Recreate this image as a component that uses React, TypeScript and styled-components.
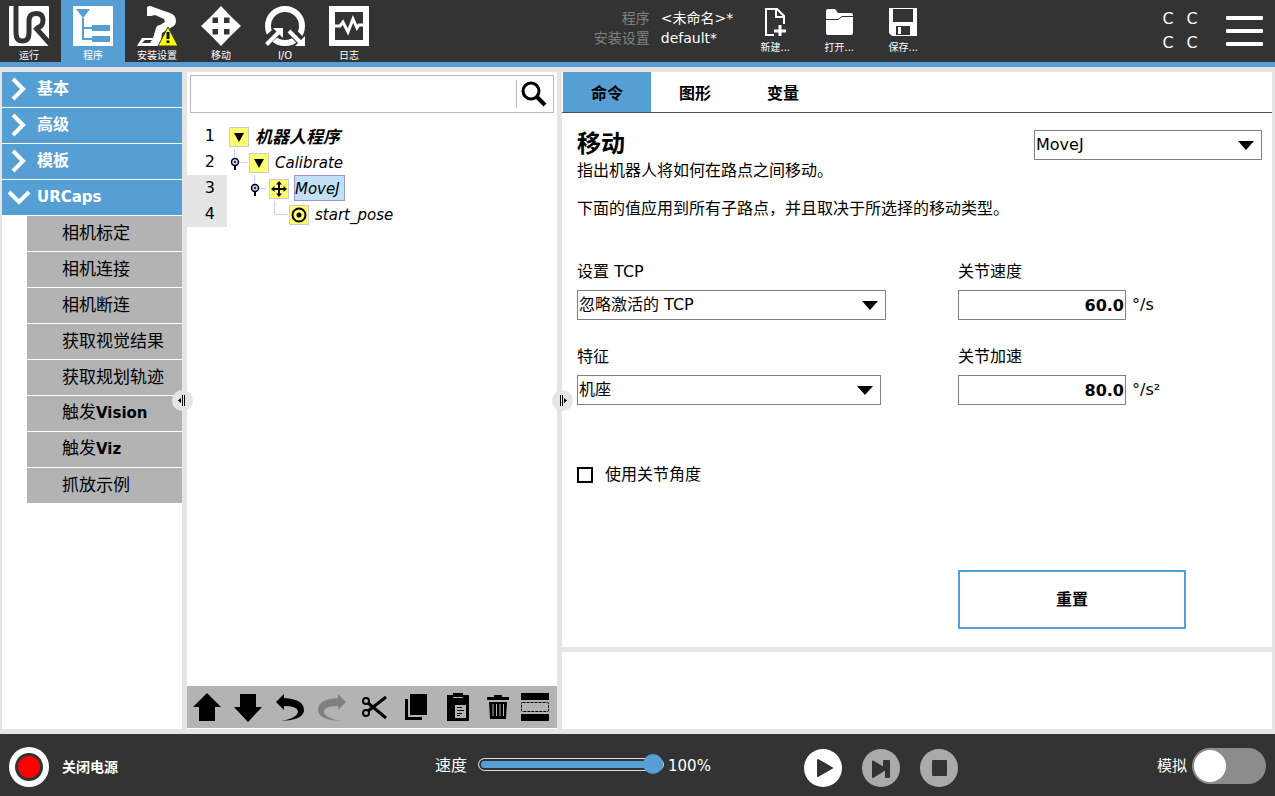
import React from "react";
import styled, { createGlobalStyle, css } from "styled-components";

const blue = "#569fd4";
const dark = "#333333";
const grey = "#b3b3b3";
const line = "#e5e5e5";
const sans = `"DejaVu Sans", "Noto Sans CJK SC", sans-serif`;

const Global = createGlobalStyle`
  *, *::before, *::after { box-sizing: border-box; }
  body { margin: 0; background: ${line}; color: #000; font: 15px/20px ${sans}; }
  button, input, select { font: inherit; color: inherit; margin: 0; }
  button { border: 0; padding: 0; background: none; cursor: pointer; }
  svg { display: block; flex: none; }
  p, h1, ul, ol { margin: 0; padding: 0; list-style: none; }
`;

const Page = styled.div`
  display: grid;
  grid-template-rows: 67px 1fr 62px;
  min-height: 100vh;
`;

/* ---------- header ---------- */
const Header = styled.header`
  display: flex;
  align-items: stretch;
  background: ${dark};
  border-bottom: 5px solid ${blue};
  color: #fff;
`;
const MainNav = styled.nav`
  display: flex;
  margin-left: -3px;
`;
const IconButton = styled.button<{ $active?: boolean; $file?: boolean }>`
  width: 64px;
  padding-top: ${(p) => (p.$file ? 8 : 6)}px;
  display: flex;
  flex-direction: column;
  align-items: center;
  gap: ${(p) => (p.$file ? 5 : 3)}px;
  background: ${(p) => (p.$active ? blue : "none")};
  font-size: 10px;
  line-height: 14px;
`;
const FileArea = styled.div`
  display: flex;
  flex: 1;
  justify-content: center;
`;
const FileInfo = styled.dl`
  display: grid;
  grid-template-columns: auto auto;
  column-gap: 11px;
  margin: 8px 10px 0 0;
  align-content: start;
  font-size: 14px;
  line-height: 20px;
  dt { color: #808080; text-align: right; }
  dd { margin: 0; }
`;
const Corner = styled.div`
  display: flex;
  align-items: flex-start;
  padding-right: 12px;
`;
const Checksum = styled.div`
  display: grid;
  grid-template-columns: 24px 24px;
  line-height: 24px;
  margin: 7px 22px 0 8px;
  font-size: 16px;
  text-align: center;
`;
const MenuButton = styled.button`
  display: grid;
  gap: 8px;
  width: 37px;
  margin-top: 16px;
  i { height: 4px; border-radius: 1px; background: #fff; margin-bottom: 1px; }
`;

/* ---------- work area ---------- */
const Work = styled.main`
  display: grid;
  grid-template-columns: 180px minmax(0, 370fr) minmax(0, 710fr);
  gap: 5px;
  padding: 5px 3px 5px 2px;
`;
const Panel = styled.section`
  position: relative;
  display: flex;
  flex-direction: column;
  min-width: 0;
  background: #fff;
`;
const Handle = styled.button<{ $offset: number }>`
  position: absolute;
  left: ${(p) => p.$offset}px;
  top: calc(50% - 11px);
  z-index: 1;
  width: 21px;
  height: 21px;
  border-radius: 50%;
  background: ${line};
`;

const Category = styled.button`
  display: flex;
  align-items: center;
  gap: 6px;
  height: 36px;
  padding: 0 0 2px 3px;
  border-bottom: 1px solid #fff;
  background: ${blue};
  color: #fff;
  font-weight: bold;
  font-size: 16px;
  text-align: left;
`;
const Latin = styled.b`
  font-size: 15px;
`;
const SubItem = styled.button`
  height: 36px;
  margin-left: 25px;
  padding: 0 0 2px 35px;
  border-bottom: 1px solid #fff;
  background: ${grey};
  font-size: 17px;
  text-align: left;
`;

const SearchBox = styled.div`
  display: flex;
  align-items: center;
  height: 38px;
  margin: 3px 3px 10px;
  border: 1px solid #b8b8b8;
`;
const SearchInput = styled.input`
  flex: 1;
  min-width: 0;
  height: 100%;
  border: 0;
  padding: 0 8px;
  outline: none;
  background: none;
`;
const SearchButton = styled.button`
  display: grid;
  place-items: center;
  width: 37px;
  height: 28px;
  padding-right: 2px;
  border-left: 1px solid #b8b8b8;
`;
const TreeRow = styled.li`
  display: flex;
  height: 26px;
`;
const LineNumber = styled.span<{ $shaded?: boolean }>`
  width: 40px;
  padding-right: 12px;
  text-align: right;
  font-size: 16px;
  line-height: 26px;
  background: ${(p) => (p.$shaded ? line : "none")};
`;
const Node = styled.div<{ $depth: number }>`
  display: flex;
  align-items: center;
  padding-left: ${(p) => (p.$depth ? p.$depth * 20 - 18 : 2)}px;
`;
const NodeIcon = styled.span`
  display: grid;
  place-items: center;
  width: 20px;
  height: 20px;
  margin-top: 1px;
  border: 1px solid #ccc;
  background: #ffff70;
`;
const NodeName = styled.span<{ $root?: boolean; $selected?: boolean }>`
  margin-left: 5px;
  height: 26px;
  line-height: 26px;
  border: 1px solid transparent;
  font-style: italic;
  ${(p) => p.$root && css`font-weight: bold; font-size: 17px;`}
  ${(p) => p.$selected && css`background: #c2e0f5; border-color: #9999cc; padding-right: 4px;`}
`;
const EditBar = styled.div`
  display: grid;
  grid-template-columns: 40px repeat(6, 42px) repeat(2, 37px);
  place-items: center;
  height: 42px;
  margin: auto 0 1px;
  background: ${grey};
`;

const RightColumn = styled.div`
  position: relative;
  display: grid;
  grid-template-rows: 1fr 77px;
  gap: 5px;
  min-width: 0;
`;
const Tabs = styled.div`
  display: flex;
  height: 41px;
  padding-left: 1px;
  border-bottom: 1px solid #4d4d4d;
`;
const Tab = styled.button<{ $active?: boolean }>`
  width: 88px;
  padding-top: 3px;
  font-weight: bold;
  font-size: 16px;
  background: ${(p) => (p.$active ? blue : "none")};
`;
const Form = styled.form`
  display: flex;
  flex: 1;
  flex-direction: column;
  padding: 17px 10px 18px 15px;
  font-size: 16px;
`;
const FormTop = styled.div`
  display: flex;
  justify-content: space-between;
`;
const Title = styled.h1`
  margin-bottom: 3px;
  font-size: 24px;
  line-height: 28px;
`;
const Lead = styled.p`
  margin-bottom: 18px;
`;
const Fields = styled.div`
  display: grid;
  grid-template-columns: minmax(0, 381fr) minmax(0, 304fr);
  row-gap: 27px;
  margin-top: 43px;
`;
const Field = styled.div`
  display: grid;
  gap: 8px;
  justify-items: start;
`;
const SelectBox = styled.div<{ $width: number }>`
  display: grid;
  align-items: center;
  width: ${(p) => p.$width}px;
  max-width: 100%;
  height: 30px;
  border: 1px solid #808080;
  > * { grid-area: 1 / 1; }
  svg { justify-self: end; margin-right: 7px; pointer-events: none; }
`;
const Select = styled.select`
  appearance: none;
  width: 100%;
  height: 28px;
  padding: 0 24px 0 1px;
  border: 0;
  border-radius: 0;
  outline: none;
  background: #fff;
`;
const ValueRow = styled.div`
  display: flex;
  align-items: center;
  gap: 6px;
`;
const NumberInput = styled.input`
  width: 168px;
  height: 30px;
  padding: 0 1px;
  border: 1px solid #808080;
  font-weight: bold;
  text-align: right;
`;
const CheckRow = styled.label`
  display: flex;
  align-items: center;
  gap: 12px;
  margin-top: 60px;
`;
const Check = styled.input`
  appearance: none;
  width: 16px;
  height: 16px;
  border: 2px solid #000;
  background: #fff;
  &:checked { background: #000; }
`;
const ResetRow = styled.div`
  display: grid;
  grid-template-columns: minmax(0, 381fr) minmax(0, 304fr);
  margin-top: auto;
`;
const ResetButton = styled.button`
  grid-column: 2;
  width: 228px;
  height: 59px;
  border: 2px solid ${blue};
  font-weight: bold;
`;

/* ---------- footer ---------- */
const Footer = styled.footer`
  display: grid;
  grid-template-columns: 426fr 369fr 462fr;
  align-items: center;
  padding: 2px 9px 0;
  background: ${dark};
  color: #fff;
  font-size: 16px;
`;
const PowerButton = styled.button`
  display: flex;
  align-items: center;
  justify-self: start;
  gap: 13px;
  padding-top: 1px;
  font-size: 14px;
  font-weight: bold;
`;
const Speed = styled.div`
  display: flex;
  align-items: center;
  padding-bottom: 4px;
  label { padding-top: 3px; }
`;
const SpeedTrack = styled.input`
  appearance: none;
  width: 186px;
  height: 20px;
  margin: 0 4px 0 11px;
  background: none;
  &::-webkit-slider-runnable-track {
    height: 13px;
    border: 1px solid #ddd;
    border-radius: 7px;
    background: ${blue};
    box-shadow: inset 0 0 0 2px ${dark};
  }
  &::-webkit-slider-thumb {
    appearance: none;
    width: 20px;
    height: 20px;
    margin-top: -5px;
    border-radius: 50%;
    background: ${blue};
  }
`;
const SpeedValue = styled.output`
  font-size: 15px;
  padding-top: 3px;
`;
const Playback = styled.div`
  display: flex;
  gap: 20px;
`;
const RightEnd = styled.div`
  display: flex;
  align-items: center;
  justify-content: space-between;
  padding-top: 4px;
`;
const SimLabel = styled.label`
  display: flex;
  align-items: center;
  gap: 5px;
  font-size: 15px;
  padding-bottom: 4px;
`;
const Toggle = styled.input`
  appearance: none;
  display: flex;
  align-items: center;
  width: 74px;
  height: 36px;
  padding: 2px;
  border-radius: 18px;
  background: #8c8c8c;
  &::before { content: ""; width: 32px; height: 32px; border-radius: 50%; background: #fff; }
  &:checked { justify-content: flex-end; }
`;

/* ---------- drawings ---------- */
const LogoIcon = () => (
  <svg width="40" height="40" viewBox="0 0 40 40">
    <rect width="40" height="40" rx="1" fill="#fff" />
    <path
      d="M7 -1V27Q7 35 13.500 35Q20 35 20 27V15Q20 7.500 27 7.500Q34 7.500 34 14Q34 20.500 28 22"
      fill="none" stroke={dark} strokeWidth="5"
    />
    <path d="M26 21L42 39" stroke={dark} strokeWidth="5" />
  </svg>
);
const ProgramIcon = () => (
  <svg width="40" height="40" viewBox="0 0 40 40">
    <rect width="40" height="40" fill="#fff" />
    <path d="M3 3H17L10 12ZM19 19H37V25H19ZM19 30H37V36H19Z" fill={blue} />
    <path d="M10 12V33H19M10 22H19" fill="none" stroke={blue} strokeWidth="2" />
  </svg>
);
const RobotIcon = () => (
  <svg width="40" height="40" viewBox="0 0 40 40">
    <path d="M10 1Q13 -1 16 1L33 7Q39 9 39 15Q39 19 35 21L25 27L24 36H31L32 40H0L5 32H16L19 22Q20 19 23 19L28 16L27 13L18 9L14 10H10Z" fill="#fff" />
    <path d="M8 34H15L13 37H5Z" fill={dark} />
    <path d="M31 21L41 40H21Z" fill="#ff0" stroke={dark} strokeLinejoin="round" />
    <path d="M31 26V33M31 34.500V37" stroke="#111" strokeWidth="3" />
  </svg>
);
const MoveIcon = () => (
  <svg width="40" height="40" viewBox="0 0 40 40" fill="#fff">
    <path d="M20 0L31 11.500H23V17H28.500V9L40 20L28.500 31V23H23V28.500H31L20 40L9 28.500H17V23H11.500V31L0 20L11.500 9V17H17V11.500H9Z" />
  </svg>
);
const IoIcon = () => (
  <svg width="40" height="40" viewBox="0 0 40 40">
    <circle cx="20" cy="20" r="17" fill="none" stroke="#fff" strokeWidth="6" />
    <path d="M-1 37L14 24M24 23L38 37" stroke={dark} strokeWidth="9" />
    <path d="M1.500 38.500L14 26M24 25L36 37" stroke="#fff" strokeWidth="4" />
    <path d="M8 22H18V32ZM40 30V40H30Z" fill="#fff" />
  </svg>
);
const LogIcon = () => (
  <svg width="40" height="40" viewBox="0 0 40 40">
    <path d="M3 3H37V37H3Z" fill="none" stroke="#fff" strokeWidth="6" />
    <path d="M6 20H11L14 16L19 26L24 13L28 22L30 19H34" fill="none" stroke="#fff" strokeWidth="3" />
  </svg>
);
const NewIcon = () => (
  <svg width="28" height="28" viewBox="0 0 28 28" fill="none" stroke="#fff" strokeWidth="2">
    <path d="M13 27H5V1H16L23 8V16M15 1V9H23" />
    <path d="M19 17V28M13 23H25" strokeWidth="3" />
  </svg>
);
const OpenIcon = () => (
  <svg width="28" height="28" viewBox="0 0 28 28">
    <path d="M1 3Q1 1 3 1H10L13 5H26Q28 5 28 7V25Q28 27 26 27H3Q1 27 1 25Z" fill="#fff" />
    <path d="M0 11.500H13L17 8.500H28" fill="none" stroke={dark} />
  </svg>
);
const SaveIcon = () => (
  <svg width="28" height="28" viewBox="0 0 28 28">
    <path d="M0 0H28V28H3L0 25Z" fill="#fff" />
    <path d="M4 1H24V14H4ZM7 18H21V27H7Z" fill={dark} />
    <path d="M9 19H12V26H9Z" fill="#fff" />
  </svg>
);
const Chevron = ({ open }: { open?: boolean }) => (
  <svg width="26" height="26" viewBox="0 0 26 26" fill="none" stroke="#fff" strokeWidth="4">
    <path d={open ? "M4 8L14 18L24 8" : "M8 3L18 13L8 23"} />
  </svg>
);
const Caret = () => (
  <svg width="16" height="9" viewBox="0 0 16 9"><path d="M0 0H16L8 9Z" /></svg>
);
const Branch = ({ leaf }: { leaf?: boolean }) => (
  <svg width="20" height="26" viewBox="0 0 20 26" fill="none">
    <path d="M5.500 0V13.500H18" stroke="#ccccff" />
    {!leaf && (
      <>
        <path d="M6 15V21" stroke="#000" strokeWidth="2" />
        <circle cx="6" cy="13" r="3.500" fill="#ccccff" stroke="#000" strokeWidth="1.500" />
        <circle cx="6" cy="13" r="1" fill="#000" />
      </>
    )}
  </svg>
);
const Triangle = () => <svg width="10" height="10" viewBox="0 0 10 10"><path d="M0 1H10L5 10Z" /></svg>;
const SmallMove = () => (
  <svg width="16" height="16" viewBox="0 0 16 16">
    <path d="M8 2V14M2 8H14" stroke="#000" strokeWidth="2" />
    <path d="M8 0L11 3.500H5ZM8 16L11 12.500H5ZM0 8L3.500 5V11ZM16 8L12.500 5V11Z" />
  </svg>
);
const Waypoint = () => (
  <svg width="16" height="16" viewBox="0 0 16 16">
    <circle cx="8" cy="8" r="6.500" fill="none" stroke="#000" strokeWidth="2" />
    <circle cx="8" cy="8" r="2.500" />
  </svg>
);

const editIcons: { label: string; art: React.ReactNode; width?: number; color?: string }[] = [
  { label: "上移", art: <path d="M14 0L28 14H22V28H6V14H0Z" /> },
  { label: "下移", art: <path d="M6 1H22V14H28L14 29L0 14H6Z" /> },
  { label: "撤销", art: <path d="M0 9L8 1V5Q28 6 28 17Q28 27 5 28Q22 25 22 18Q21 13 8 13V17Z" /> },
  { label: "重做", color: "#808080", art: <path d="M28 9L20 1V5Q0 6 0 17Q0 27 23 28Q6 25 6 18Q7 13 20 13V17Z" /> },
  {
    label: "剪切", width: 26, art: (
      <g fill="none" stroke="#000" strokeWidth="2">
        <circle cx="5" cy="8" r="3" /><circle cx="5" cy="20" r="3" />
        <path d="M7 10L25 25M7 18L25 4" strokeWidth="3" />
      </g>
    ),
  },
  { label: "复制", width: 24, art: <path d="M6 1H23V22H6ZM1 6H4V24H18V27H1Z" /> },
  {
    label: "粘贴", width: 24, art: (
      <>
        <path d="M1 2H7V5H17V2H23V28H1ZM7 0H17V4H7Z" />
        <path d="M9 12H20V25H9Z" fill={grey} />
        <path d="M11 14.500H16M11 17.500H18M11 20.500H16M11 22.500H14" stroke="#000" />
      </>
    ),
  },
  {
    label: "删除", width: 22, art: (
      <>
        <path d="M0 4H22V7H0ZM2 9H20L19 26H3Z" />
        <path d="M8 5V3H14V5" fill="none" stroke="#000" strokeWidth="2" />
        <path d="M6 11V23M9.500 11V23M13 11V23M16.500 11V23" stroke={grey} />
      </>
    ),
  },
  {
    label: "抑制", art: (
      <>
        <path d="M0 0H28V7H0ZM0 21H28V28H0Z" />
        <rect x="0.500" y="9.500" width="27" height="9" rx="1" fill="none" stroke="#000" strokeDasharray="3 1" />
      </>
    ),
  },
];

const mainNav = [
  { label: "运行", icon: <LogoIcon /> },
  { label: "程序", icon: <ProgramIcon />, active: true },
  { label: "安装设置", icon: <RobotIcon /> },
  { label: "移动", icon: <MoveIcon /> },
  { label: "I/O", icon: <IoIcon /> },
  { label: "日志", icon: <LogIcon /> },
];
const fileActions = [
  { label: "新建...", icon: <NewIcon /> },
  { label: "打开...", icon: <OpenIcon /> },
  { label: "保存...", icon: <SaveIcon /> },
];
const urcaps: React.ReactNode[] = [
  "相机标定", "相机连接", "相机断连", "获取视觉结果", "获取规划轨迹",
  <>触发<Latin>Vision</Latin></>, <>触发<Latin>Viz</Latin></>, "抓放示例",
];

const Picker = ({ id, value, width, label }: { id: string; value: string; width: number; label?: string }) => (
  <SelectBox $width={width}>
    <Select id={id} defaultValue={value} aria-label={label}>
      <option>{value}</option>
    </Select>
    <Caret />
  </SelectBox>
);

const RoundButton = ({ label, fill, children }: { label: string; fill: string; children: React.ReactNode }) => (
  <button aria-label={label}>
    <svg width="38" height="38" viewBox="0 0 38 38">
      <circle cx="19" cy="19" r="19" fill={fill} />
      <g fill={dark} stroke={dark} strokeWidth="2" strokeLinejoin="round">{children}</g>
    </svg>
  </button>
);

export default function App() {
  return (
    <Page>
      <Global />
      <Header>
        <MainNav>
          {mainNav.map((n) => (
            <IconButton key={n.label} $active={n.active}>{n.icon}{n.label}</IconButton>
          ))}
        </MainNav>
        <FileArea>
          <FileInfo>
            <dt>程序</dt><dd>&lt;未命名&gt;*</dd>
            <dt>安装设置</dt><dd>default*</dd>
          </FileInfo>
          {fileActions.map((f) => (
            <IconButton key={f.label} $file>{f.icon}{f.label}</IconButton>
          ))}
        </FileArea>
        <Corner>
          <Checksum><span>C</span><span>C</span><span>C</span><span>C</span></Checksum>
          <MenuButton aria-label="菜单"><i /><i /><i /></MenuButton>
        </Corner>
      </Header>

      <Work>
        <Panel>
          <Category><Chevron /><span>基本</span></Category>
          <Category><Chevron /><span>高级</span></Category>
          <Category><Chevron /><span>模板</span></Category>
          <Category><Chevron open /><Latin>URCaps</Latin></Category>
          {urcaps.map((u, i) => <SubItem key={i}>{u}</SubItem>)}
        </Panel>

        <Panel>
          <Handle $offset={-15} aria-label="收起左栏">
            <svg width="21" height="21" viewBox="0 0 21 21"><path d="M6 10.500L9 8V13ZM10 5H11V16H10ZM12 5H13V16H12Z" /></svg>
          </Handle>
          <SearchBox>
            <SearchInput aria-label="搜索" />
            <SearchButton aria-label="搜索">
              <svg width="26" height="26" viewBox="0 0 26 26" fill="none" stroke="#000">
                <circle cx="10" cy="10" r="8" strokeWidth="3" />
                <path d="M16 16L24 24" strokeWidth="4" />
              </svg>
            </SearchButton>
          </SearchBox>
          <ol>
            <TreeRow>
              <LineNumber>1</LineNumber>
              <Node $depth={0}><NodeIcon><Triangle /></NodeIcon><NodeName $root>机器人程序</NodeName></Node>
            </TreeRow>
            <TreeRow>
              <LineNumber>2</LineNumber>
              <Node $depth={1}><Branch /><NodeIcon><Triangle /></NodeIcon><NodeName>Calibrate</NodeName></Node>
            </TreeRow>
            <TreeRow>
              <LineNumber $shaded>3</LineNumber>
              <Node $depth={2}><Branch /><NodeIcon><SmallMove /></NodeIcon><NodeName $selected>MoveJ</NodeName></Node>
            </TreeRow>
            <TreeRow>
              <LineNumber $shaded>4</LineNumber>
              <Node $depth={3}><Branch leaf /><NodeIcon><Waypoint /></NodeIcon><NodeName>start_pose</NodeName></Node>
            </TreeRow>
          </ol>
          <EditBar>
            {editIcons.map((e) => (
              <button key={e.label} aria-label={e.label}>
                <svg width={e.width ?? 28} height="29" viewBox={`0 0 ${e.width ?? 28} 29`} fill={e.color ?? "#000"}>{e.art}</svg>
              </button>
            ))}
          </EditBar>
        </Panel>

        <RightColumn>
          <Handle $offset={-10} aria-label="收起右栏">
            <svg width="21" height="21" viewBox="0 0 21 21"><path d="M15 10.500L12 8V13ZM8 5H9V16H8ZM10 5H11V16H10Z" /></svg>
          </Handle>
          <Panel>
            <Tabs>
              <Tab $active>命令</Tab>
              <Tab>图形</Tab>
              <Tab>变量</Tab>
            </Tabs>
            <Form onSubmit={(e) => e.preventDefault()}>
              <FormTop>
                <div>
                  <Title>移动</Title>
                  <Lead>指出机器人将如何在路点之间移动。</Lead>
                  <p>下面的值应用到所有子路点，并且取决于所选择的移动类型。</p>
                </div>
                <Picker id="move-type" label="移动类型" value="MoveJ" width={228} />
              </FormTop>
              <Fields>
                <Field>
                  <label htmlFor="tcp">设置 TCP</label>
                  <Picker id="tcp" value="忽略激活的 TCP" width={309} />
                </Field>
                <Field>
                  <label htmlFor="speed">关节速度</label>
                  <ValueRow><NumberInput id="speed" defaultValue="60.0" />°/s</ValueRow>
                </Field>
                <Field>
                  <label htmlFor="feature">特征</label>
                  <Picker id="feature" value="机座" width={304} />
                </Field>
                <Field>
                  <label htmlFor="accel">关节加速</label>
                  <ValueRow><NumberInput id="accel" defaultValue="80.0" />°/s²</ValueRow>
                </Field>
              </Fields>
              <CheckRow><Check type="checkbox" />使用关节角度</CheckRow>
              <ResetRow><ResetButton type="button">重置</ResetButton></ResetRow>
            </Form>
          </Panel>
          <Panel />
        </RightColumn>
      </Work>

      <Footer>
        <PowerButton>
          <svg width="40" height="40" viewBox="0 0 40 40">
            <circle cx="20" cy="20" r="20" fill="#fff" />
            <circle cx="20" cy="20" r="12.500" fill="red" stroke={dark} strokeWidth="3" />
          </svg>
          关闭电源
        </PowerButton>
        <Speed>
          <label htmlFor="slider">速度</label>
          <SpeedTrack id="slider" type="range" min="0" max="100" defaultValue="100" />
          <SpeedValue htmlFor="slider">100%</SpeedValue>
        </Speed>
        <RightEnd>
          <Playback>
            <RoundButton label="播放" fill="#fff"><path d="M14 11L28 19L14 27Z" /></RoundButton>
            <RoundButton label="单步" fill="#aaa"><path d="M11 12.500L22 19V12H27V28H24V20L11 28Z" /></RoundButton>
            <RoundButton label="停止" fill="#aaa"><path d="M13 12H26V26H13Z" /></RoundButton>
          </Playback>
          <SimLabel>模拟<Toggle type="checkbox" /></SimLabel>
        </RightEnd>
      </Footer>
    </Page>
  );
}
